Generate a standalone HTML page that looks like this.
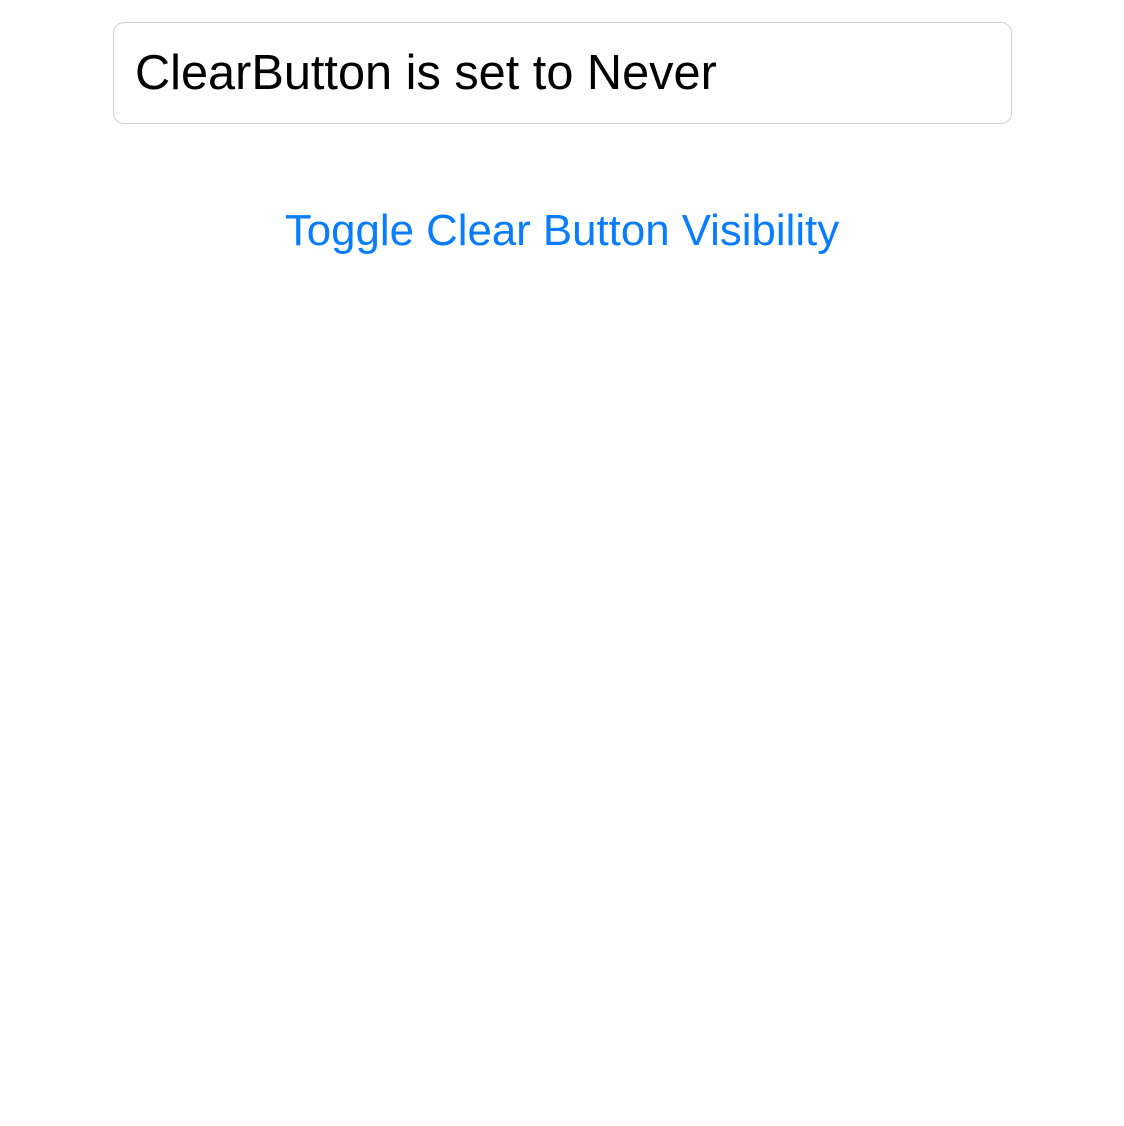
<!DOCTYPE html>
<html><head><style>
body{margin:0;width:1124px;height:1126px;background:#fff;font-family:"Liberation Sans",sans-serif;position:relative}
.box{position:absolute;left:113px;top:22px;width:897px;height:100px;border:1px solid #d0d0d0;border-radius:11px;box-sizing:content-box}
.t{position:absolute;left:135px;top:43px;font-size:48.7px;line-height:60px;color:#000;white-space:nowrap}
.b{position:absolute;left:0;width:1124px;text-align:center;top:203px;font-size:43.8px;line-height:56px;color:#0a7cff;white-space:nowrap}
</style></head><body>
<div class="box"></div>
<div class="t">ClearButton is set to Never</div>
<div class="b">Toggle Clear Button Visibility</div>
</body></html>
